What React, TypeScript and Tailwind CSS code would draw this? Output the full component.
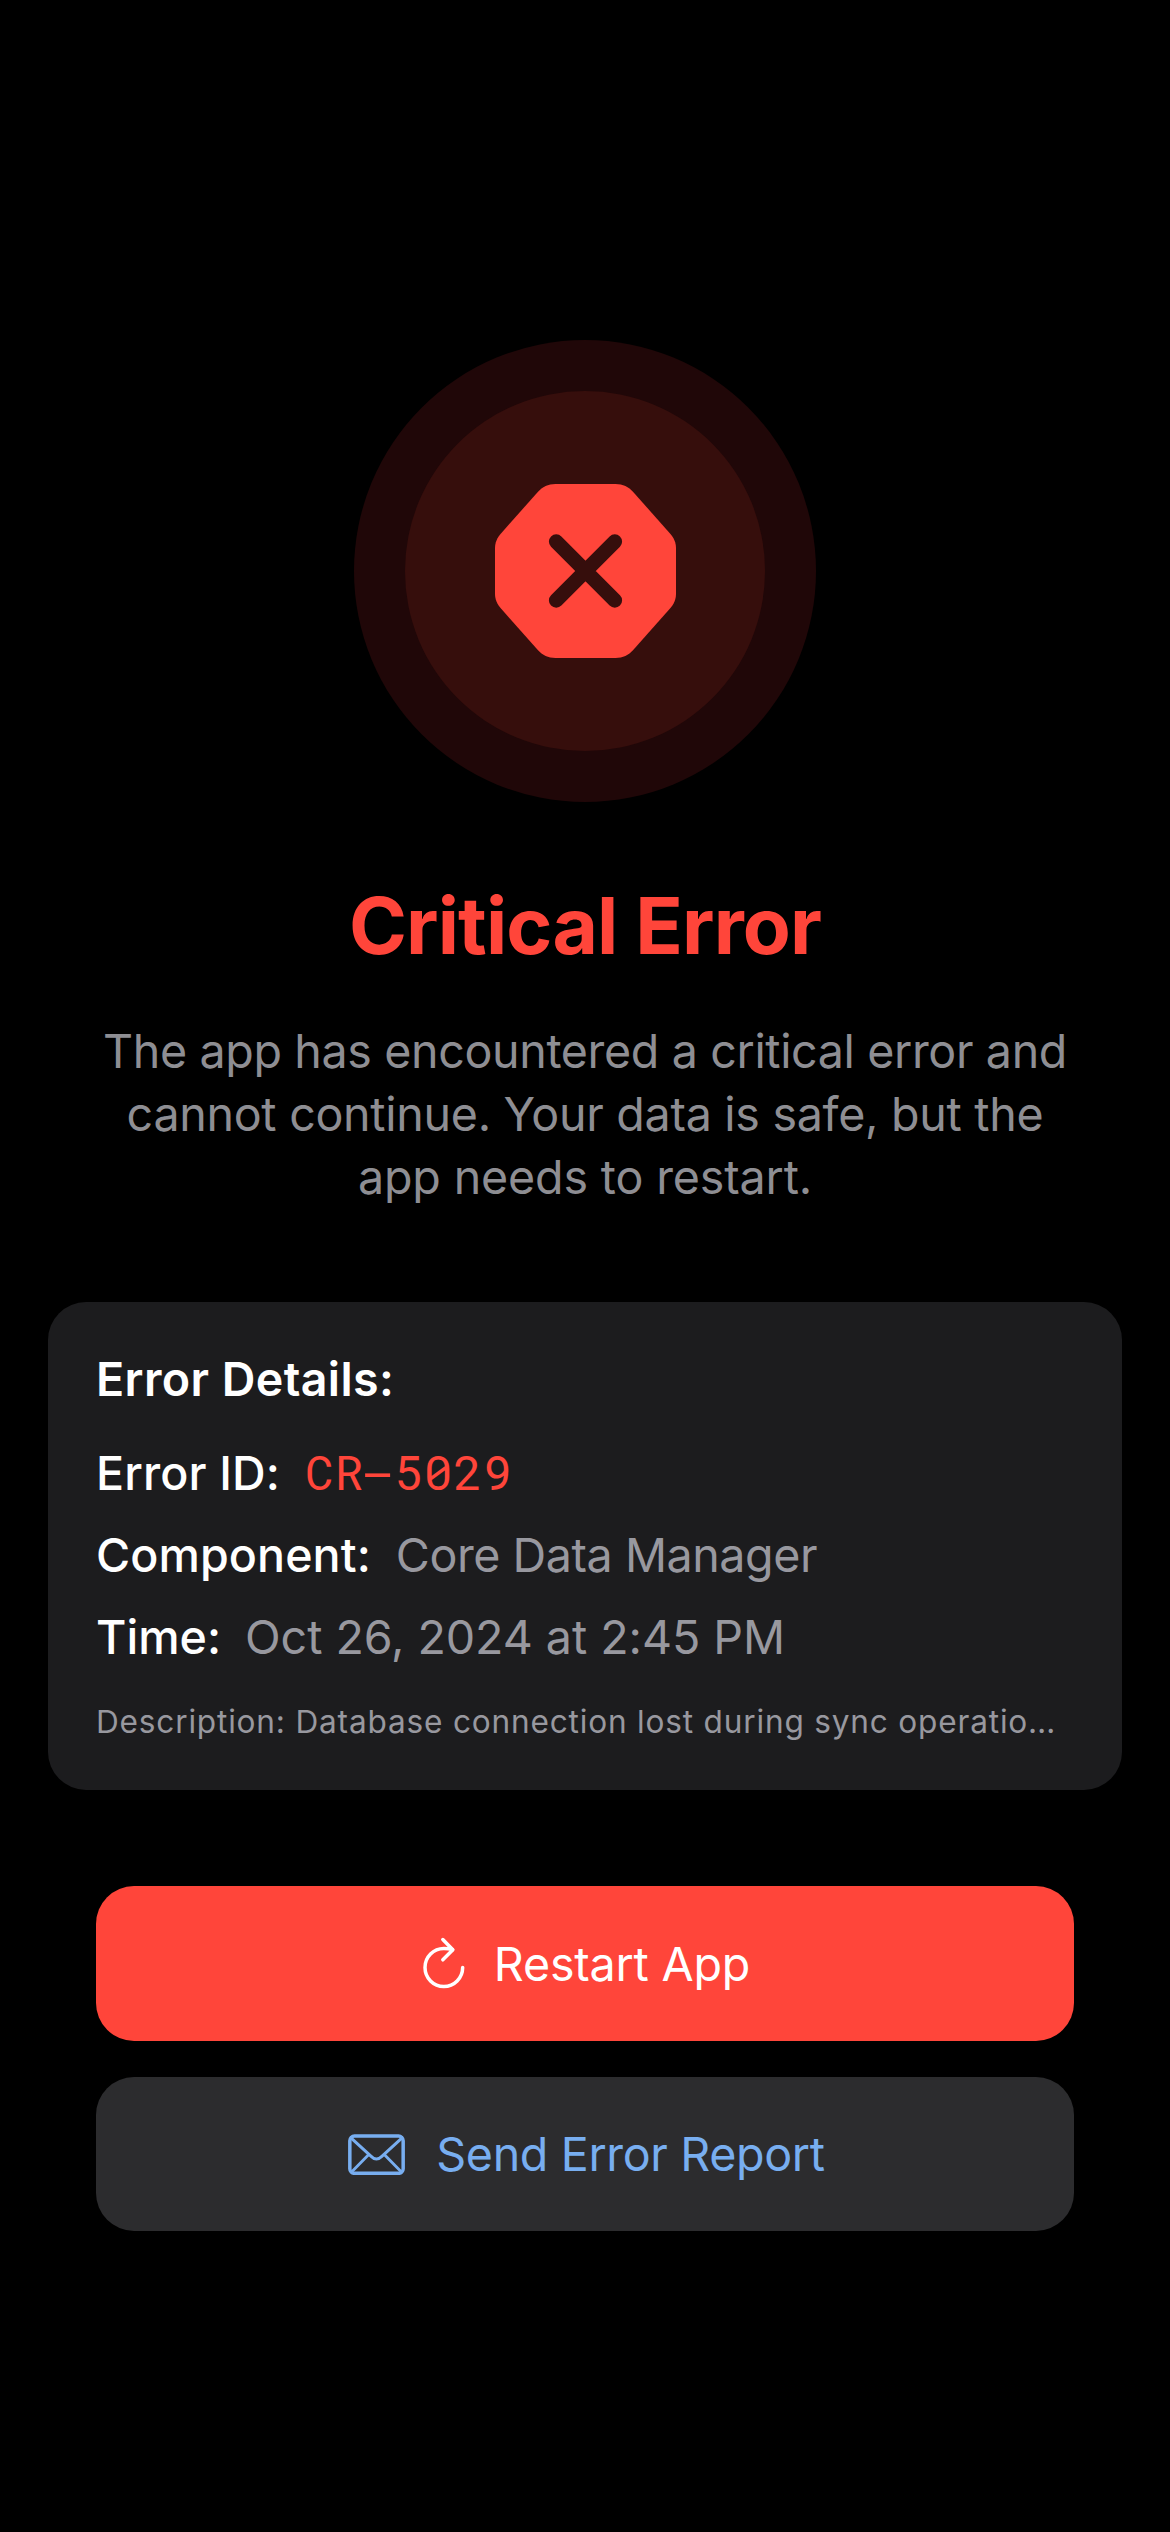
import React from "react";

function OctagonCross() {
  return (
    <svg className="h-[174px] w-[181px]" viewBox="0 0 181 174" fill="none">
      <path
        d="M60.5 0H120.5C128 0 133.500 2.800 138.200 8L174.800 49.200C179 54 181 58.500 181 64.500V109.500C181 115.500 179 120 174.800 124.800L138.200 166C133.500 171.200 128 174 120.500 174H60.500C53 174 47.500 171.200 42.800 166L6.200 124.800C2 120 0 115.500 0 109.500V64.500C0 58.500 2 54 6.200 49.200L42.800 8C47.500 2.800 53 0 60.500 0Z"
        fill="#ff453a"
      />
      <path d="M61.200 57.600L119.800 116.400M119.800 57.600L61.200 116.400" stroke="#360e0c" strokeWidth="14.600" strokeLinecap="round" />
    </svg>
  );
}

function RestartIcon() {
  return (
    <svg className="mb-0.5 h-[52px] w-[42px]" viewBox="68.500 80 126 156" fill="none" stroke="white" strokeWidth="10.500" strokeLinecap="round" strokeLinejoin="round">
      <path d="M187.500 171.500A56.500 57 0 1 1 131 114.500Q145 114.500 157 118" />
      <path d="M128 87.500L158 118L128 148.500" />
    </svg>
  );
}

function MailIcon() {
  return (
    <svg className="h-[41px] w-[57px]" viewBox="56.500 132 171 123" fill="none" stroke="#78aef0" strokeLinecap="round">
      <rect x="62" y="138" width="160" height="112" rx="14" strokeWidth="10.500" />
      <path d="M67 145L126 199Q141.500 215 158 199L217 145" strokeWidth="9" />
      <path d="M68 245L118 194M216 245L166 194" strokeWidth="8.500" />
    </svg>
  );
}

export default function App() {
  return (
    <main className="flex min-h-[2532px] w-full flex-col items-center bg-black pt-[340px] font-['Inter',sans-serif] text-[46.6px] leading-[56px] text-white">
      <div className="flex size-[462px] items-center justify-center rounded-full bg-[#200708]">
        <div className="flex size-[360px] items-center justify-center rounded-full bg-[#360e0c]">
          <OctagonCross />
        </div>
      </div>

      <h1 className="mt-[73px] text-[78.4px] leading-[101px] font-bold tracking-[-0.84px] text-[#ff453a]">Critical Error</h1>

      <p className="mt-11 text-center leading-[63px] text-[#8e8e93]">
        <span className="block tracking-[-0.366px]">The app has encountered a critical error and</span>
        <span className="block tracking-[-0.291px]">cannot continue. Your data is safe, but the</span>
        <span className="block tracking-[-0.156px]">app needs to restart.</span>
      </p>

      <section className="mt-[93px] flex h-[488px] w-[1074px] flex-col rounded-[38px] bg-[#1c1c1e] px-12 pt-[49px] whitespace-nowrap">
        <h2 className="font-semibold tracking-[0.4px]">Error Details:</h2>
        <dl className="mt-[38px] flex flex-col gap-[26px]">
          <div className="flex h-14 gap-[25px]">
            <dt className="font-medium tracking-[0.13px]">Error ID:</dt>
            <dd className="font-['Roboto_Mono',monospace] text-[47.8px] leading-[54px] tracking-[1px] text-[#ff453a]">
              CR<span className="inline-block scale-x-[1.4]">-</span>5029
            </dd>
          </div>
          <div className="flex h-14 gap-[25px]">
            <dt className="font-medium tracking-[0.08px]">Component:</dt>
            <dd className="tracking-[-0.45px] text-[#98989f]">Core Data Manager</dd>
          </div>
          <div className="flex h-14 gap-6">
            <dt className="font-medium">Time:</dt>
            <dd className="tracking-[-0.06px] text-[#98989f]">Oct 26, 2024 at 2:45 PM</dd>
          </div>
        </dl>
        <p className="mt-[37px] text-[31.6px] leading-10 tracking-[0.81px] text-[#98989f]">
          Description: Database connection lost during sync operatio…
        </p>
      </section>

      <div className="mt-24 flex w-[978px] flex-col gap-9">
        <button className="flex h-[155px] items-center justify-center gap-[29px] rounded-[38px] bg-[#ff453a] pl-[3px]">
          <RestartIcon />
          <span className="tracking-[-0.2px]">Restart App</span>
        </button>
        <button className="flex h-[154px] items-center justify-center gap-[31px] rounded-[38px] bg-[#2c2c2e] pl-[3px] text-[#78aef0]">
          <MailIcon />
          <span className="tracking-[-0.35px]">Send Error Report</span>
        </button>
      </div>
    </main>
  );
}
